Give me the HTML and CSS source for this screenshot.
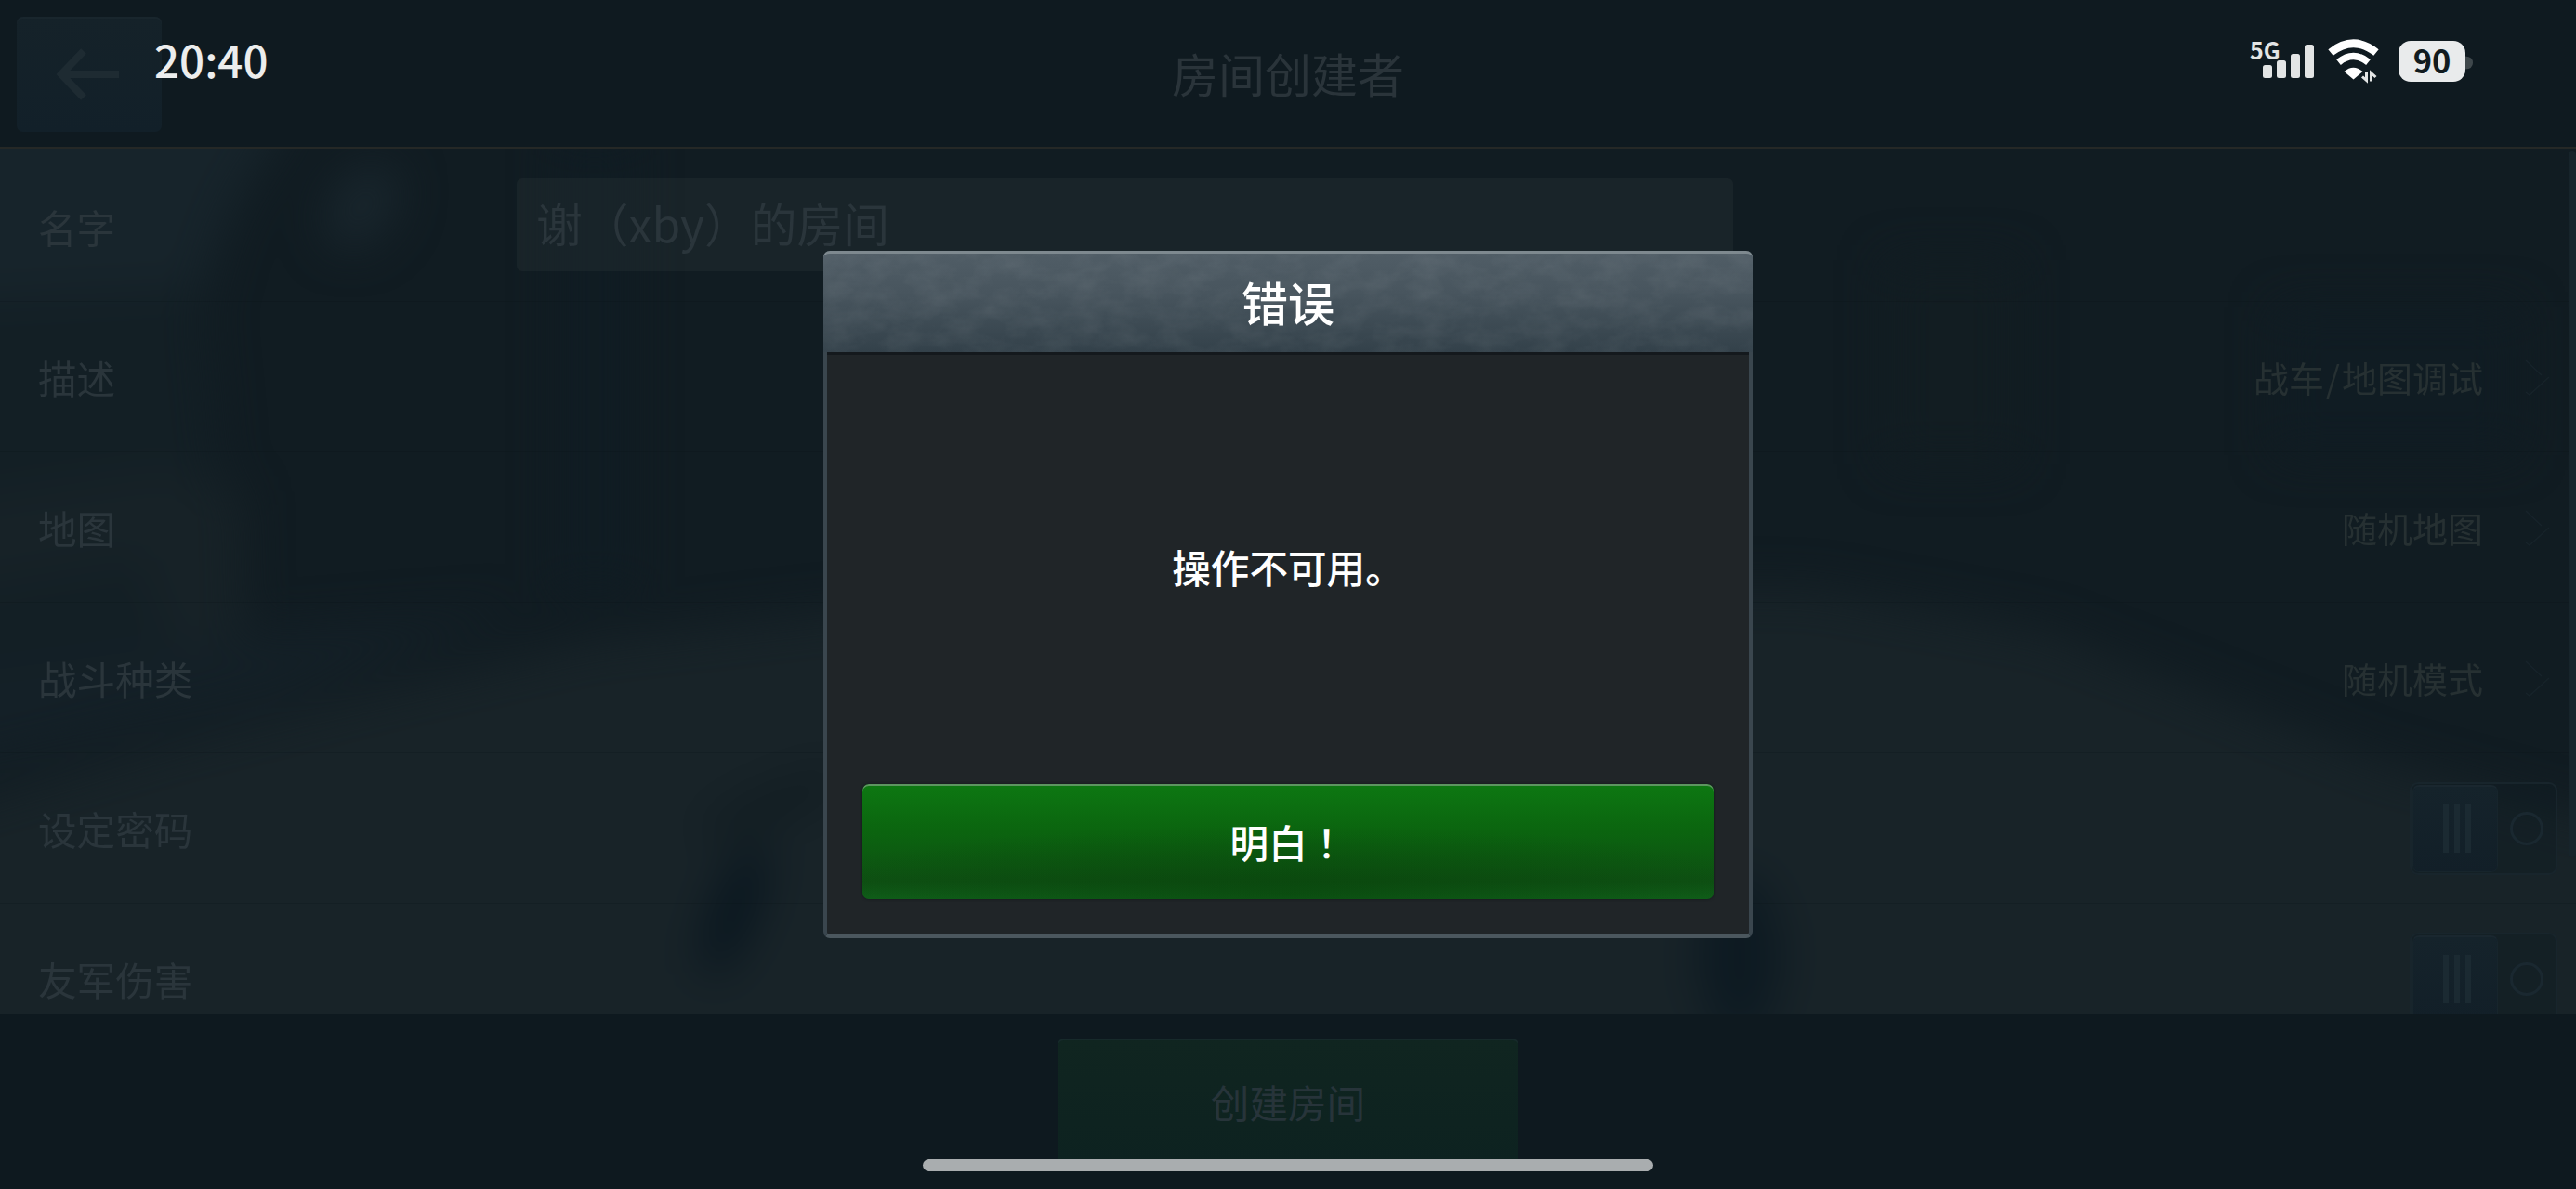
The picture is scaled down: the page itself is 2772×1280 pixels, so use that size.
FILE: index.html
```html
<!DOCTYPE html>
<html lang="zh-CN">
  <head>
    <meta charset="UTF-8" />
    <meta name="viewport" content="width=device-width, initial-scale=1.0" />
    <title>房间创建者</title>
    <link rel="stylesheet" href="styles.css" />
  </head>
  <body>
    <div class="screen">
      <header class="header">
        <button class="back">
          <svg width="68" height="56" viewBox="0 0 68 56">
            <path d="M30 3L6 28L30 53M6 28H68" fill="none" stroke="#1e2b32" stroke-width="8" />
          </svg>
        </button>
        <h1>房间创建者</h1>
      </header>

      <main class="content">
        <svg class="backdrop" viewBox="0 0 2772 932" preserveAspectRatio="none">
          <defs>
            <filter id="soft" x="-50%" y="-50%" width="200%" height="200%" color-interpolation-filters="sRGB">
              <feGaussianBlur stdDeviation="24" />
            </filter>
          </defs>
          <g filter="url(#soft)">
            <path d="M-80 -80H330L250 60L220 170L235 330L270 560L-80 640Z" fill="#131f25" />
            <path d="M-80 -80H340L260 50L215 150L-80 165Z" fill="#17242b" />
            <path d="M-80 385L180 345L260 370L265 560L185 540L150 440L-80 480Z" fill="#172227" />
            <ellipse cx="390" cy="62" rx="32" ry="50" transform="rotate(35 390 62)" fill="#19262d" />
            <rect x="600" y="-20" width="80" height="500" fill="#101c23" />
            <rect x="2030" y="120" width="140" height="220" fill="#121d22" />
            <rect x="2450" y="170" width="260" height="160" fill="#101c23" />
            <path d="M-80 715L180 640L400 585L640 530L900 500L1386 470L1950 475L2200 520L2380 590L2560 660L2860 740V1020H-80Z" fill="#182328" />
            <path d="M-80 570L300 520L560 500L300 590L-80 680Z" fill="#142027" />
            <ellipse cx="790" cy="820" rx="24" ry="76" transform="rotate(22 790 820)" fill="#09161f" />
            <ellipse cx="835" cy="705" rx="90" ry="22" transform="rotate(-22 835 705)" fill="#121d22" />
            <ellipse cx="1872" cy="870" rx="45" ry="90" fill="#0d1a22" />
          </g>
        </svg>

        <div class="row">
          <label>名字</label>
          <div class="name-input">谢（xby）的房间</div>
        </div>
        <div class="row">
          <label>描述</label>
          <span class="value">战车<span class="slash">/</span>地图调试</span>
          <svg class="chevron" width="28" height="40" viewBox="0 0 28 40">
            <path d="M1 1L18 17M26 19L5 38L1 35" />
          </svg>
        </div>
        <div class="row">
          <label>地图</label>
          <span class="value">随机地图</span>
          <svg class="chevron" width="28" height="40" viewBox="0 0 28 40">
            <path d="M1 1L18 17M26 19L5 38L1 35" />
          </svg>
        </div>
        <div class="row">
          <label>战斗种类</label>
          <span class="value">随机模式</span>
          <svg class="chevron" width="28" height="40" viewBox="0 0 28 40">
            <path d="M1 1L18 17M26 19L5 38L1 35" />
          </svg>
        </div>
        <div class="row">
          <label>设定密码</label>
          <div class="toggle">
            <div class="knob"><i></i><i></i><i></i></div>
            <div class="off"></div>
          </div>
        </div>
        <div class="row">
          <label>友军伤害</label>
          <div class="toggle">
            <div class="knob"><i></i><i></i><i></i></div>
            <div class="off"></div>
          </div>
        </div>
        <div class="scrollbar"></div>
      </main>

      <footer class="footer">
        <button class="create">创建房间</button>
      </footer>
    </div>

    <div class="dialog">
      <h2>错误</h2>
      <svg class="grain">
        <filter id="grain" x="0" y="0" width="100%" height="100%">
          <feTurbulence type="fractalNoise" baseFrequency="0.03 0.05" numOctaves="5" />
          <feColorMatrix values="0 0 0 0 1  0 0 0 0 1  0 0 0 0 1  0.35 0 0 0 -0.12" />
        </filter>
        <rect width="100%" height="100%" filter="url(#grain)" />
      </svg>
      <p>操作不可用。</p>
      <button class="ok">明白<span class="mark" lang="zh-TW">！</span></button>
    </div>

    <div class="statusbar">
      <span class="clock">20:40</span>
      <svg class="status-icons" width="250" height="64" viewBox="-6 -14 250 64">
        <text class="network" x="-1" y="23">5G</text>
        <g fill="#e3e5e5">
          <rect x="13" y="29" width="10" height="14" rx="2.5" />
          <rect x="28" y="24" width="10" height="19" rx="2.5" />
          <rect x="43" y="17" width="10" height="26" rx="2.5" />
          <rect x="58" y="7" width="10" height="36" rx="2.5" />
        </g>
        <g fill="none" stroke="#fff" stroke-width="8.500">
          <path d="M86 15.500Q110.500 -4 135 15.500" />
          <path d="M94.500 26Q110.500 13 126.500 26" stroke-width="7.500" />
        </g>
        <path d="M100.500 36Q110.500 27.500 120.500 36L110.500 44.500Z" fill="#fff" />
        <path d="M124.500 36.500V45.500L120 41.500M129.500 46.500V37.500L134.500 42" fill="none" stroke="#e3e5e5" stroke-width="3" />
        <path d="M231 19.500Q239 20 239 26.500T231 33.500Z" fill="#3f484c" />
        <rect x="159" y="3" width="72" height="44" rx="13" fill="#e9ebec" />
        <text class="percent" x="195" y="38" text-anchor="middle">90</text>
      </svg>
    </div>
    <div class="home-indicator"></div>
  </body>
</html>
```

FILE: styles.css
```css
* {
  box-sizing: border-box;
}

body {
  margin: 0;
  width: 2772px;
  height: 1280px;
  overflow: hidden;
  position: relative;
  background-color: #0e191f;
  color: #263137;
  font-family: "Noto Sans CJK SC", "Noto Sans", sans-serif;
}

button {
  font-family: inherit;
  padding: 0;
  border: none;
}

.screen {
  display: flex;
  flex-direction: column;
  height: 1280px;
}

.header {
  height: 160px;
  padding: 18px;
  display: grid;
  grid-template-columns: 156px 1fr 156px;
  background-color: #0f1a20;
  border-bottom: 2px solid #252826;
}

.back {
  height: 124px;
  display: flex;
  align-items: center;
  padding-left: 42px;
  padding-bottom: 1px;
  border-radius: 7px;
  background: linear-gradient(#152229, #122029);
  box-shadow: inset 0 2px 0 #19262d;
}

.header h1 {
  margin: 0;
  text-align: center;
  font-size: 50px;
  font-weight: 400;
  line-height: 120px;
  color: #2a343a;
}

.content {
  height: 932px;
  padding-top: 3px;
  position: relative;
  overflow: hidden;
  background-color: #111c22;
}

.backdrop {
  position: absolute;
  left: 0;
  top: 0;
  width: 100%;
  height: 100%;
}

.row {
  position: relative;
  height: 162px;
  display: flex;
  align-items: center;
  padding: 0 20px 0 41px;
  border-bottom: 1px solid rgba(8, 18, 24, 0.22);
  font-size: 41.600px;
}

.row label {
  width: 515px;
  color: #2a353b;
}

.name-input {
  width: 1309px;
  height: 100px;
  margin-bottom: 3px;
  padding-left: 21px;
  border-radius: 6px;
  background-color: rgba(42, 52, 57, 0.32);
  font-size: 49.800px;
  line-height: 94px;
  color: #2a353b;
}

.value {
  margin-left: auto;
  margin-right: 45px;
  font-size: 38px;
  color: #263032;
}

.slash {
  margin: 0 2px;
}

.chevron {
  margin-right: 7px;
  margin-top: 3px;
  fill: none;
  stroke: #17232a;
  stroke-width: 1.5;
}

.toggle {
  margin-left: auto;
  width: 159px;
  height: 100px;
  padding: 1px;
  display: flex;
  align-items: center;
  border: 2px solid #18252c;
  border-radius: 9px;
  background-color: rgba(14, 26, 33, 0.3);
}

.knob {
  width: 92px;
  height: 94px;
  padding-left: 3px;
  display: flex;
  justify-content: center;
  align-items: center;
  gap: 6px;
  border: 1px solid #17252c;
  border-top: 2px solid #1a272f;
  border-radius: 7px;
  background: linear-gradient(#15232b, #121f28);
}

.knob i {
  width: 6px;
  height: 52px;
  background-color: #1b2a32;
}

.off {
  width: 36px;
  height: 36px;
  margin-left: 13px;
  border: 3px solid #1a2830;
  border-radius: 50%;
}

.scrollbar {
  position: absolute;
  right: 0;
  top: 3px;
  width: 8px;
  height: 760px;
  border-radius: 4px;
  background-color: #17242b;
}

.footer {
  flex: 1;
  padding-top: 26px;
  text-align: center;
  background-color: #0e191f;
}

.create {
  width: 496px;
  height: 136px;
  border-radius: 7px;
  background: linear-gradient(#102520, #0d2220);
  box-shadow: inset 0 2px 0 #172a2b;
  font-size: 41.600px;
  color: #27343a;
}

.dialog {
  position: absolute;
  left: 886px;
  top: 270px;
  width: 1000px;
  height: 740px;
  display: flex;
  flex-direction: column;
  border: 4px solid #3a464e;
  border-top: none;
  border-bottom-color: #4b575e;
  border-radius: 7px;
  background-color: #202528;
  color: #fff;
}

.dialog h2 {
  margin: 0 -4px;
  height: 109px;
  flex: none;
  border-top: 3px solid #7e898f;
  border-radius: 7px 7px 0 0;
  background: linear-gradient(#505d66, #48555e 40%, #33414a);
  text-align: center;
  font-size: 50px;
  font-weight: 500;
  line-height: 103px;
}

.dialog p {
  margin: 0;
  flex: 1;
  display: flex;
  align-items: center;
  justify-content: center;
  padding-bottom: 7px;
  border-top: 3px solid #14191d;
  font-size: 41.600px;
  font-weight: 500;
}

.grain {
  position: absolute;
  left: -4px;
  top: 3px;
  width: 1000px;
  height: 106px;
  opacity: 0.3;
}

.ok {
  flex: none;
  height: 124px;
  margin: 0 38px 38px;
  border-radius: 7px;
  background: radial-gradient(ellipse 60% 60% at 50% 95%, rgba(6, 62, 8, 0.5), transparent), linear-gradient(#0d7812, #0b650f 40%, #0e5013 85%, #10601a);
  box-shadow: inset 0 2px 0 #5d9560, 0 0 3px #111719;
  color: #fff;
  font-size: 41.600px;
  font-weight: 500;
}

.mark {
  font-family: "Noto Sans CJK TC", sans-serif;
}

.statusbar {
  position: absolute;
  left: 166px;
  top: 27px;
  width: 2500px;
  height: 64px;
  display: flex;
  justify-content: space-between;
}

.clock {
  margin-top: 14px;
  font-size: 47.500px;
  font-weight: 500;
  line-height: 46px;
  color: #eceded;
}

.network {
  font-size: 25px;
  font-weight: 700;
  fill: #e3e5e5;
}

.percent {
  font-size: 34.500px;
  font-weight: 700;
  fill: #111b20;
}

.home-indicator {
  position: absolute;
  left: 993px;
  top: 1248px;
  width: 786px;
  height: 13px;
  border-radius: 7px;
  background-color: #a9adaf;
}
```
